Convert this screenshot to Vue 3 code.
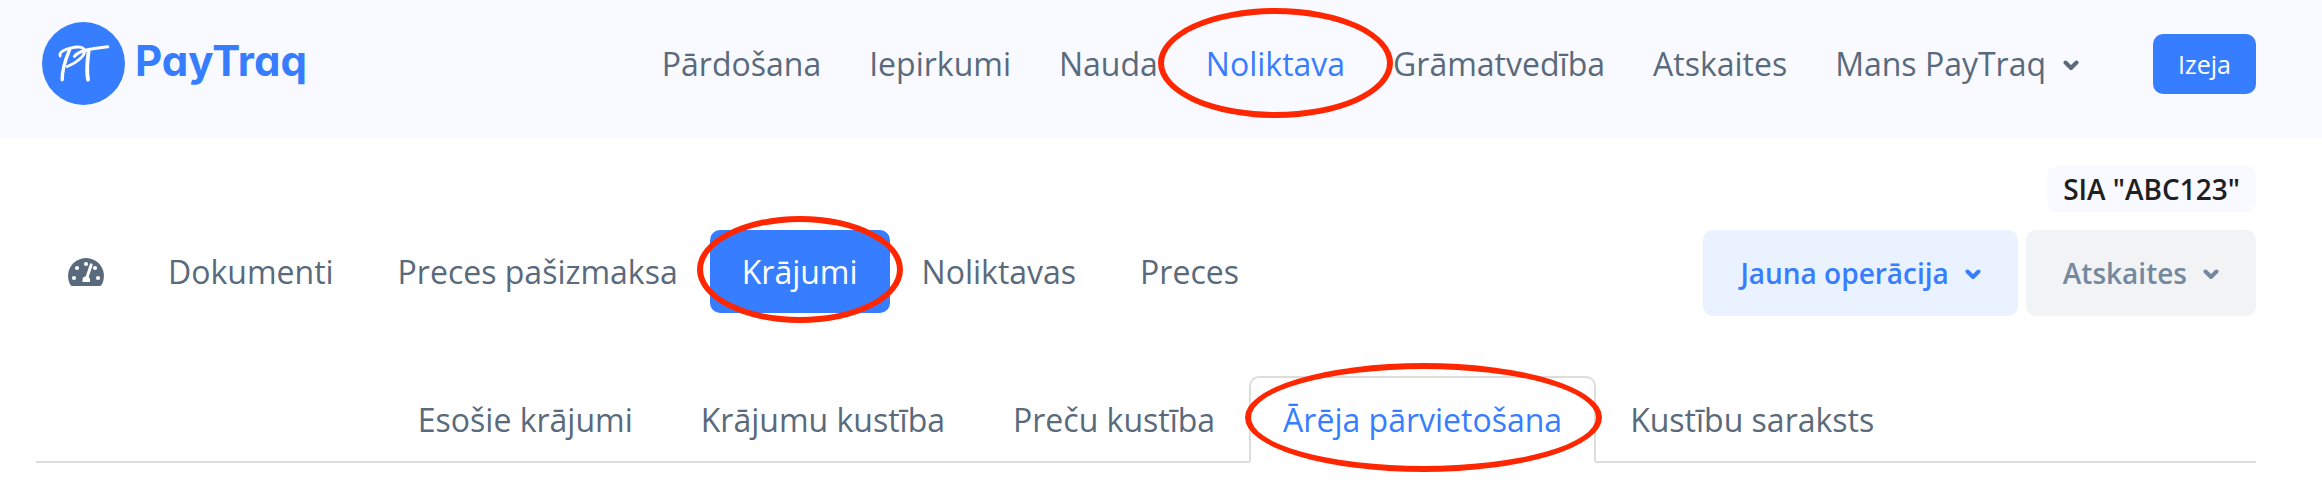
<script setup>
const mainNav = [
  { label: 'Pārdošana' },
  { label: 'Iepirkumi' },
  { label: 'Nauda' },
  { label: 'Noliktava', active: true },
  { label: 'Grāmatvedība' },
  { label: 'Atskaites' },
]

const sections = [
  { label: 'Dokumenti' },
  { label: 'Preces pašizmaksa' },
  { label: 'Krājumi', active: true },
  { label: 'Noliktavas' },
  { label: 'Preces' },
]

const tabs = [
  { label: 'Esošie krājumi' },
  { label: 'Krājumu kustība' },
  { label: 'Preču kustība' },
  { label: 'Ārēja pārvietošana', active: true },
  { label: 'Kustību saraksts' },
]
</script>

<template>
  <div class="page">
    <header class="header">
      <a href="#" class="brand">
        <svg class="mark" viewBox="0 0 82 82" aria-hidden="true">
          <circle cx="41" cy="41" r="41" fill="#377dff" />
          <g fill="none" stroke="#fff" stroke-linecap="round" stroke-linejoin="round">
            <path d="M18 33.500C16.500 30 22 27 29 25.500C35 24 41 24.500 42 28C43 33 35 40 25 44" stroke-width="2.800" />
            <path d="M27.500 26.500C24 35 19.500 46 20 57" stroke-width="3.400" />
            <path d="M32 34C36 29 43 27.500 50 26.500C56 25.500 60 25 65 24.500" stroke-width="3" />
            <path d="M46 29C45 37 43.500 48 45.500 57" stroke-width="3.800" />
          </g>
        </svg>
        <span class="wordmark">PayTraq</span>
      </a>
      <nav class="main-nav">
        <a v-for="item in mainNav" :key="item.label" href="#" class="nav-link" :class="{ active: item.active }">
          {{ item.label }}
          <span v-if="item.active" class="ring ring-nav"></span>
        </a>
        <button type="button" class="nav-link account">
          Mans PayTraq
          <svg class="chevron" viewBox="0 0 16 11" aria-hidden="true"><path d="M2.500 2.500L8 8L13.500 2.500" /></svg>
        </button>
      </nav>
      <button type="button" class="logout">Izeja</button>
    </header>

    <main class="content">
      <div class="company-row"><span class="company">SIA "ABC123"</span></div>

      <div class="toolbar">
        <nav class="sections">
          <a href="#" class="section" aria-label="Panelis">
            <svg class="gauge" viewBox="0 0 36 28" aria-hidden="true">
              <path d="M18 0a18 18 0 0 1 15.500 27q-.6 1-1.800 1H4.300q-1.200 0-1.800-1A18 18 0 0 1 18 0z" fill="#596a7c" />
              <g fill="#fff">
                <circle cx="6" cy="20" r="2.100" />
                <circle cx="9" cy="10" r="2.100" />
                <circle cx="18" cy="6" r="2.100" />
                <circle cx="27" cy="10" r="2.100" />
                <circle cx="30" cy="20" r="2.100" />
                <path d="M14.500 24v-2a3.800 3.800 0 0 1 3.300-3.800L21.700 6.400a1.500 1.500 0 0 1 2.900.9L20.700 19a3.800 3.800 0 0 1 1.300 3v2z" />
              </g>
            </svg>
          </a>
          <a v-for="item in sections" :key="item.label" href="#" class="section" :class="{ active: item.active }">
            {{ item.label }}
            <span v-if="item.active" class="ring ring-section"></span>
          </a>
        </nav>
        <div class="actions">
          <button type="button" class="action primary">
            Jauna operācija
            <svg class="chevron" viewBox="0 0 16 11" aria-hidden="true"><path d="M2.500 2.500L8 8L13.500 2.500" /></svg>
          </button>
          <button type="button" class="action muted">
            Atskaites
            <svg class="chevron" viewBox="0 0 16 11" aria-hidden="true"><path d="M2.500 2.500L8 8L13.500 2.500" /></svg>
          </button>
        </div>
      </div>

      <nav class="tabs">
        <a v-for="item in tabs" :key="item.label" href="#" class="tab" :class="{ active: item.active }">
          {{ item.label }}
          <span v-if="item.active" class="ring ring-tab"></span>
        </a>
      </nav>
    </main>
  </div>
</template>

<style>
body {
  background: #fff;
}
</style>

<style scoped>
.page {
  font-family: "Open Sans", sans-serif;
  font-size: 32px;
  line-height: 47px;
  color: #596a7c;
  white-space: nowrap;
}

a {
  color: inherit;
  text-decoration: none;
}

button {
  border: 0;
  background: none;
  color: inherit;
  font: inherit;
  white-space: nowrap;
}

.header {
  display: flex;
  align-items: center;
  padding: 22px 66px 32px 42px;
  background: #f9faff;
}

.brand {
  display: flex;
  align-items: center;
  gap: 10px;
  margin-right: auto;
}

.mark {
  width: 83px;
  height: 83px;
}

.wordmark {
  padding-bottom: 6px;
  font-family: Inter, sans-serif;
  font-size: 42px;
  font-weight: 700;
  font-feature-settings: "cv11";
  color: #377dff;
}

.main-nav {
  display: flex;
  gap: 48px;
}

.nav-link {
  position: relative;
  padding: 0;
}

.nav-link.active {
  color: #377dff;
}

.account {
  display: flex;
  align-items: center;
  gap: 17px;
}

.chevron {
  width: 16px;
  height: 11px;
  margin-top: 4px;
  fill: none;
  stroke: currentColor;
  stroke-width: 4;
  stroke-linecap: round;
  stroke-linejoin: round;
}

.logout {
  margin-left: 74px;
  padding: 12px 25px;
  border-radius: 10px;
  background: #377dff;
  color: #fff;
  font-size: 25px;
  line-height: 36px;
}

.content {
  padding: 29px 66px 33px 36px;
}

.company-row {
  display: flex;
  justify-content: flex-end;
}

.company {
  padding: 4px 16px;
  border-radius: 10px;
  background: #f9faff;
  color: #1e2022;
  font-size: 28px;
  font-weight: 600;
  line-height: 38px;
}

.toolbar {
  display: flex;
  justify-content: space-between;
  align-items: flex-start;
  padding-top: 18px;
}

.sections {
  display: flex;
}

.section {
  position: relative;
  padding: 18px 32px;
  border-radius: 10px;
}

.section.active {
  background: #377dff;
  color: #fff;
}

.gauge {
  display: block;
  width: 36px;
  height: 28px;
  margin-top: 10px;
}

.actions {
  display: flex;
  gap: 8px;
}

.action {
  display: flex;
  align-items: center;
  gap: 16px;
  padding: 19px 37px;
  border-radius: 10px;
  font-size: 28px;
  font-weight: 600;
  line-height: 48px;
}

.action .chevron {
  margin-top: 2px;
}

.primary {
  background: #eaf1ff;
  color: #377dff;
}

.muted {
  background: #f1f3f5;
  color: #74899f;
}

.tabs {
  display: flex;
  justify-content: center;
  margin-top: 60px;
  border-bottom: 2px solid #ddd;
}

.tab {
  position: relative;
  margin-bottom: -2px;
  padding: 18px 32px;
  border: 2px solid transparent;
  border-radius: 10px 10px 0 0;
}

.tab.active {
  border-color: #ddd #ddd #fff;
  background: #fff;
  color: #377dff;
}

.ring {
  position: absolute;
  z-index: 1;
  box-sizing: border-box;
  border: 6px solid #ff2600;
  border-radius: 50%;
  pointer-events: none;
}

.ring-nav {
  inset: -32px -48px -31px;
}

.ring-section {
  inset: -14px -13px -10px;
}

.ring-tab {
  inset: -15px -8px -11px -6px;
}
</style>
